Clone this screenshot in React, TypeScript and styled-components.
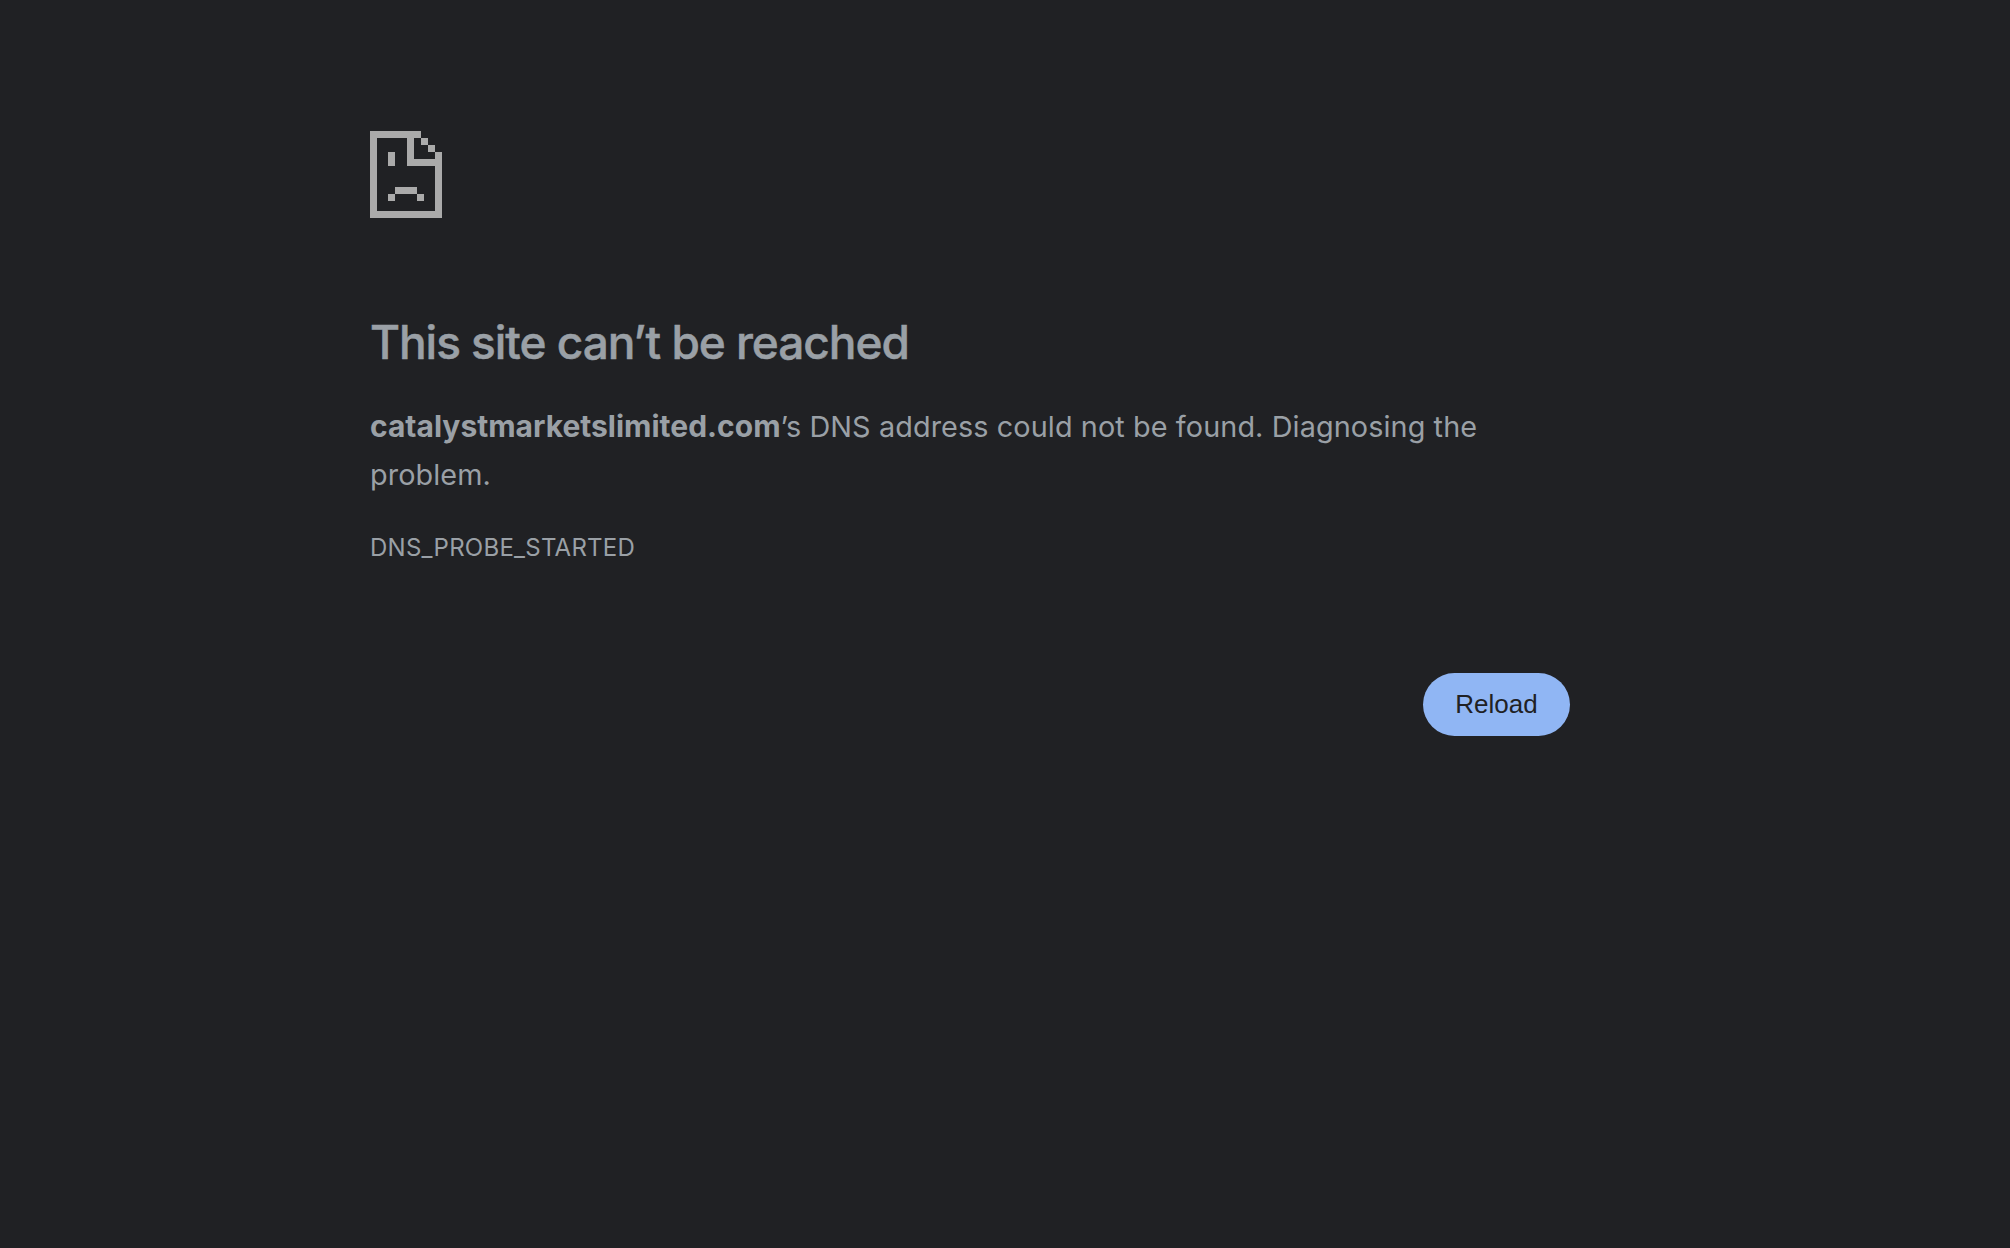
import styled, { createGlobalStyle } from "styled-components";

const GlobalStyle = createGlobalStyle`
    html, body {
        margin: 0;
        padding: 0;
        background-color: #202124;
    }
`;

const Styled = {
    Page: styled.div`
        box-sizing: border-box;
        min-height: 1248px;
        padding: 131px 0 0 370px;
        background-color: #202124;
        color: #9aa0a6;
        font-family: Inter, "Liberation Sans", sans-serif;
    `,
    Main: styled.main`
        display: flex;
        flex-direction: column;
        width: 1200px;
    `,
    Icon: styled.svg`
        display: block;
        width: 72px;
        height: 87px;
        margin-bottom: 99px;
        fill: #aaaaaa;
        shape-rendering: crispEdges;
    `,
    Title: styled.h1`
        margin: 0 0 36px;
        font-size: 46px;
        line-height: 50px;
        font-weight: 500;
        letter-spacing: -1.05px;
        -webkit-text-stroke: 0.5px #9aa0a6;
        color: #9aa0a6;
    `,
    Summary: styled.p`
        margin: 0 0 34px;
        font-size: 28.8px;
        line-height: 48px;
        font-weight: 400;
        letter-spacing: 0.1px;
    `,
    Domain: styled.strong`
        font-size: 30px;
        line-height: 1;
        font-weight: 700;
        letter-spacing: 0;
    `,
    ErrorCode: styled.div`
        font-size: 24px;
        line-height: 30px;
        letter-spacing: 0.25px;
    `,
    Actions: styled.div`
        display: flex;
        justify-content: flex-end;
        margin-top: 110px;
    `,
    ReloadButton: styled.button`
        width: 147px;
        height: 63px;
        border: none;
        border-radius: 32px;
        background-color: #90b6f4;
        color: #202124;
        font-family: "Liberation Sans", Arial, sans-serif;
        font-size: 26px;
        cursor: pointer;
    `,
};

const SadFileIcon = () => (
    <Styled.Icon viewBox="0 0 72 87" aria-hidden="true">
        <path d="M0 0H51V7H58V14H65V21H72V87H0ZM7 7V80H65V35H37V7ZM44 7V28H65V21H58V14H51V7Z" fillRule="evenodd" />
        <path d="M18 21H25V35H18ZM25 56H47V63H54V70H47V63H25V70H18V63H25Z" />
    </Styled.Icon>
);

const App = () => {
    return (
        <Styled.Page>
            <GlobalStyle />
            <Styled.Main>
                <SadFileIcon />
                <Styled.Title>This site can’t be reached</Styled.Title>
                <Styled.Summary>
                    <Styled.Domain>catalystmarketslimited.com</Styled.Domain>’s DNS address could not be found. Diagnosing the problem.
                </Styled.Summary>
                <Styled.ErrorCode>DNS_PROBE_STARTED</Styled.ErrorCode>
                <Styled.Actions>
                    <Styled.ReloadButton type="button">Reload</Styled.ReloadButton>
                </Styled.Actions>
            </Styled.Main>
        </Styled.Page>
    );
};

export default App;
